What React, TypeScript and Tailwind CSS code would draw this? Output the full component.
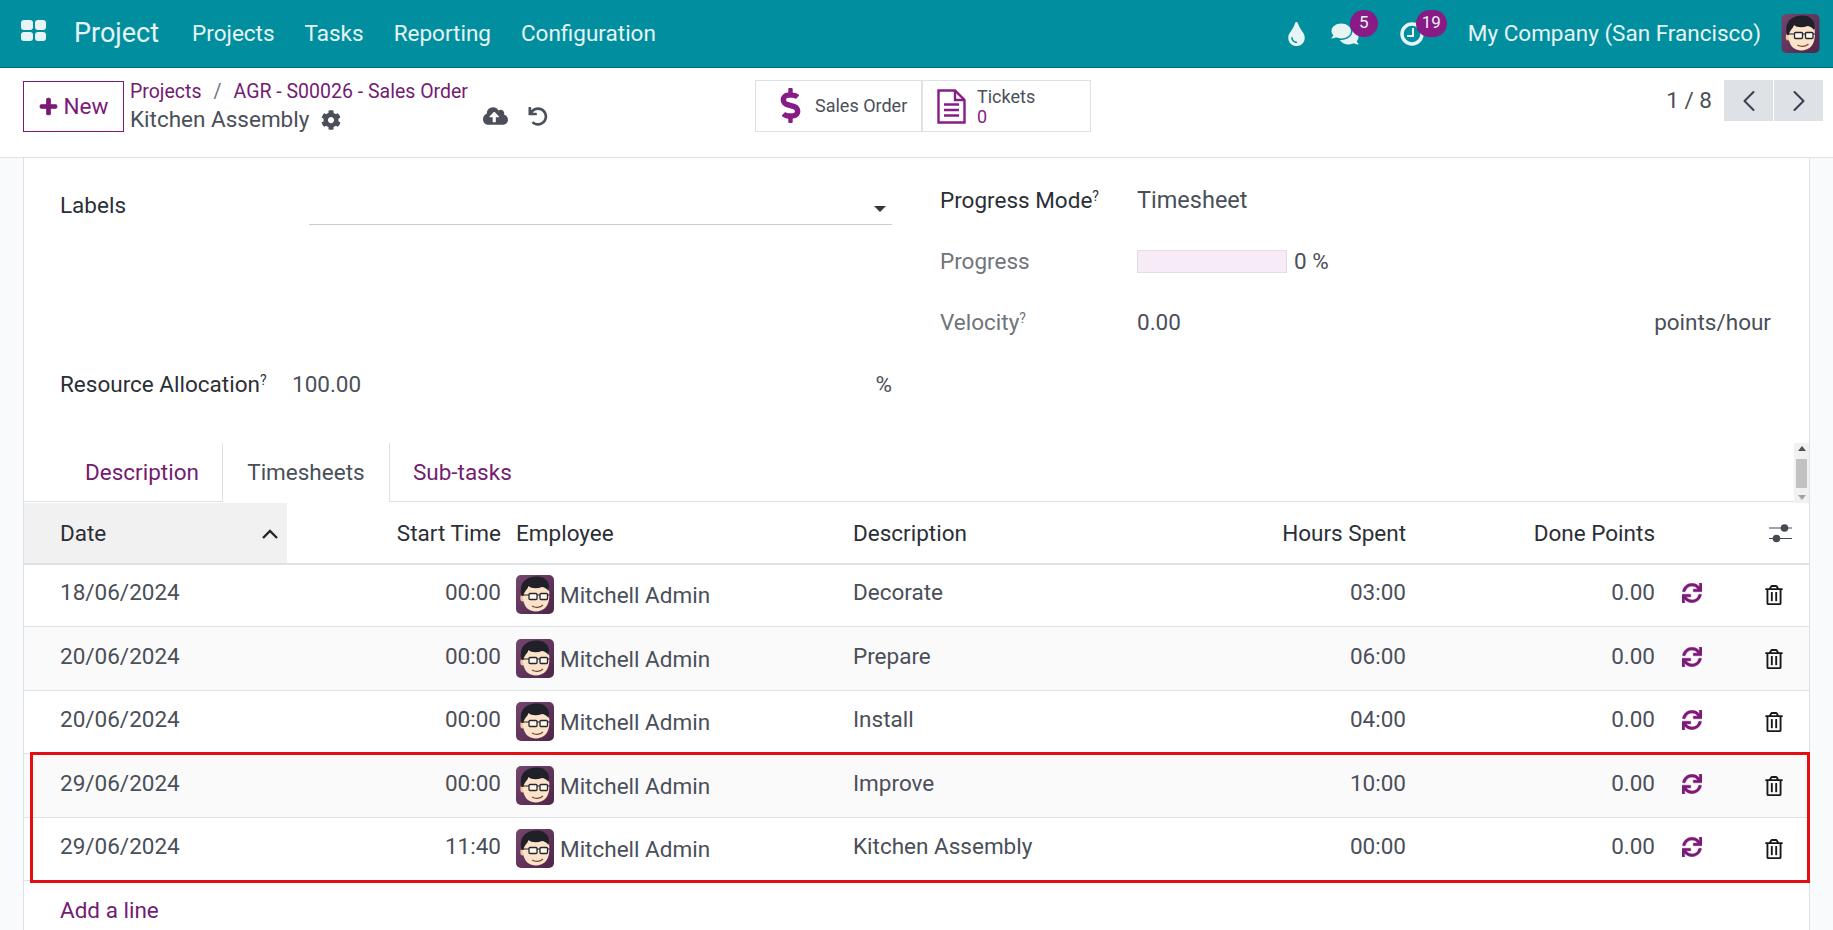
import { ChevronLeft, ChevronRight } from "lucide-react";
import {
  FaCloudUploadAlt,
  FaCog,
  FaComments,
  FaDollarSign,
  FaPlus,
  FaRegTrashAlt,
  FaSync,
  FaTint,
  FaUndo,
} from "react-icons/fa";

const navLinks = ["Projects", "Tasks", "Reporting", "Configuration"];

const rows = [
  { date: "18/06/2024", start: "00:00", desc: "Decorate", hours: "03:00", height: "h-[62px]", bg: "bg-white" },
  { date: "20/06/2024", start: "00:00", desc: "Prepare", hours: "06:00", height: "h-[63.6px]", bg: "bg-[#fafafa]" },
  { date: "20/06/2024", start: "00:00", desc: "Install", hours: "04:00", height: "h-[63.6px]", bg: "bg-white" },
];

const marked = [
  { date: "29/06/2024", start: "00:00", desc: "Improve", hours: "10:00", height: "h-[63.6px]", bg: "bg-[#fafafa]" },
  { date: "29/06/2024", start: "11:40", desc: "Kitchen Assembly", hours: "00:00", height: "h-[63.6px]", bg: "bg-white" },
];

const gridCols = "grid grid-cols-[263px_221px_337px_305px_263px_249px_83px_1fr]";

function Avatar({ className }: { className?: string }) {
  return (
    <svg className={className} viewBox="0 0 38 39">
      <defs>
        <linearGradient id="avatarBg" x1="0" y1="0" x2="1" y2="1">
          <stop offset="0" stopColor="#75456e" />
          <stop offset="1" stopColor="#4f2549" />
        </linearGradient>
      </defs>
      <rect width="38" height="39" rx="5" fill="url(#avatarBg)" />
      <ellipse cx="6.500" cy="23" rx="2.200" ry="3.500" fill="#eec3a0" />
      <path d="M6.500 14 C10 9 28 9 33 15 C34 22 33 28 30 32 C26 37 17 38 12 34 C8 31 6 24 6.500 14z" fill="#fbe3ca" />
      <path d="M5.500 21 C3.500 13 6 6 11 4 C15 0.500 27 0.500 30 5 C33 7 33.500 12 32.500 16 C30 13 28 12 26 12 C21 14 15 13.500 12.500 11 C12 14 8 16 7.500 21z" fill="#202028" />
      <rect x="13" y="18.500" width="8" height="6" rx="1" fill="#fffaf2" stroke="#26262b" strokeWidth="1.300" />
      <rect x="24" y="18.500" width="7.500" height="6" rx="1" fill="#fffaf2" stroke="#26262b" strokeWidth="1.300" />
      <path d="M21 20 H24 M7 20 H13 M31.500 20 H34" stroke="#26262b" strokeWidth="1.100" />
      <path d="M16 31 C19 33 24 33 27 30" fill="none" stroke="#7a4a35" strokeWidth="1.100" />
    </svg>
  );
}

function TimesheetRow({ row }: { row: (typeof rows)[number] }) {
  return (
    <div className={`${gridCols} items-end border-b border-[#dee2e6] ${row.height} ${row.bg}`}>
      <div className="pb-[22px] pl-[36px] leading-6">{row.date}</div>
      <div className="pr-[7px] pb-[22px] text-right leading-6">{row.start}</div>
      <div className="flex items-end pb-[12px] pl-2">
        <Avatar className="h-[39px] w-[38px] shrink-0" />
        <span className="ml-[6px] pb-[7px] leading-6">Mitchell Admin</span>
      </div>
      <div className="pb-[22px] pl-2 leading-6">{row.desc}</div>
      <div className="pr-[7px] pb-[22px] text-right leading-6">{row.hours}</div>
      <div className="pr-[7px] pb-[22px] text-right leading-6">0.00</div>
      <div className="pb-[23px] pl-5">
        <FaSync className="h-[20px] w-[20px] text-[#7c1a78]" stroke="currentColor" strokeWidth={10} />
      </div>
      <div className="pb-[21px] pl-[20px]">
        <FaRegTrashAlt className="h-[20px] w-[18px] text-[#16181b]" />
      </div>
    </div>
  );
}

export default function App() {
  return (
    <div className="flex h-[930px] w-[1833px] flex-col overflow-hidden bg-[#f9fafb] text-[22.5px] text-[#4a4f59] [font-family:Roboto,sans-serif]">
      {/* Navbar */}
      <header className="flex h-[68px] shrink-0 items-center border-b border-[#016b77] bg-[#018f9f] text-[#e6f4f5]">
        <div className="ml-[21px] -mt-[6px] grid h-[21px] w-[25px] grid-cols-2 gap-[2px]">
          <span className="rounded-[3px] bg-[#e6f4f5]" />
          <span className="rounded-[3px] bg-[#e6f4f5]" />
          <span className="rounded-[3px] bg-[#e6f4f5]" />
          <span className="rounded-[3px] bg-[#e6f4f5]" />
        </div>
        <span className="ml-[28px] text-[27px]">Project</span>
        <div className="mt-[1px] ml-[33px] flex gap-[30px]">
          {navLinks.map((link) => (
            <span key={link}>{link}</span>
          ))}
        </div>

        <FaTint className="ml-auto h-[24px] w-[19px]" />
        <div className="relative ml-[24px] h-[24px] w-[30px]">
          <FaComments className="h-[24px] w-[30px]" />
          <span className="absolute -top-[12px] left-[20px] flex h-[27px] w-[28px] items-center justify-center rounded-full bg-[#8a1a85] text-[17px]">
            5
          </span>
        </div>
        <div className="relative ml-[40px] h-[24px] w-[24px]">
          <svg className="h-[24px] w-[24px]" viewBox="0 0 24 24" fill="none" stroke="currentColor">
            <circle cx="12" cy="12" r="10" strokeWidth="3.400" />
            <path d="M13 6 V14 H7" strokeWidth="2" />
          </svg>
          <span className="absolute -top-[12px] left-[16px] flex h-[27px] w-[31px] items-center justify-center rounded-full bg-[#8a1a85] text-[17px]">
            19
          </span>
        </div>
        <span className="ml-[44px]">My Company (San Francisco)</span>
        <Avatar className="mr-[13px] ml-[20px] h-[39px] w-[39px]" />
      </header>

      {/* Control panel */}
      <div className="flex h-[90px] shrink-0 items-start border-b border-[#dee2e6] bg-white pt-[12px]">
        <button className="mt-[1px] ml-[23px] flex h-[51px] w-[101px] items-center justify-center gap-[6px] border border-[#7c1a78] text-[#7c1a78]">
          <FaPlus className="h-[19px] w-[19px]" stroke="currentColor" strokeWidth={30} />
          New
        </button>
        <div className="ml-[6px] w-[335px]">
          <div className="flex h-[24px] items-center text-[19.500px] whitespace-nowrap text-[#741b72]">
            Projects
            <span className="mx-[12px] text-[#6c757d]">/</span>
            AGR - S00026 - Sales Order
          </div>
          <div className="-mt-[1px] flex items-center whitespace-nowrap">
            Kitchen Assembly
            <FaCog className="ml-[12px] h-[20px] w-[20px]" />
          </div>
        </div>
        <div className="mt-[24px] flex items-center">
          <FaCloudUploadAlt className="ml-[18px] h-[24px] w-[25px]" />
          <FaUndo className="ml-[20px] h-[19px] w-[20px]" />
        </div>
        <div className="ml-[207px] flex h-[52px] border border-[#dee2e6]">
          <div className="flex w-[167px] items-center border-r-2 border-[#dee2e6] pb-[2px] pl-[24px] text-[18px]">
            <FaDollarSign className="h-[35px] w-[21px] text-[#861c85]" />
            <span className="ml-[14px]">Sales Order</span>
          </div>
          <div className="flex w-[167px] items-center pl-[14px]">
            <svg className="h-[35px] w-[29px] text-[#861c85]" viewBox="0 0 29 35" fill="none" stroke="currentColor" strokeWidth="2.400">
              <path d="M1.500 1.500 H18 L27.500 11 V33.500 H1.500z" />
              <path d="M18 1.500 V11 H27.500" />
              <path d="M7 15.500 H22 M7 21 H22 M7 26.500 H22" />
            </svg>
            <div className="ml-[11px] pt-[2px] text-[18px] leading-[20px]">
              <div>Tickets</div>
              <div className="text-[#861c85]">0</div>
            </div>
          </div>
        </div>
        <span className="mt-[4px] ml-auto">1 / 8</span>
        <div className="mr-[10px] ml-[12px] flex h-[41px] gap-[1px]">
          <div className="flex w-[49px] items-center justify-center bg-[#dee2e6]">
            <ChevronLeft className="h-[36px] w-[36px] text-[#374151]" strokeWidth={1.400} />
          </div>
          <div className="flex w-[49px] items-center justify-center bg-[#dee2e6]">
            <ChevronRight className="h-[36px] w-[36px] text-[#374151]" strokeWidth={1.400} />
          </div>
        </div>
      </div>

      {/* Sheet */}
      <main className="mx-[23px] min-h-0 flex-1 border-x border-[#dee2e6] bg-white">
        <div className="flex h-[285px] pt-[30px]">
          <div className="ml-[36px] w-[832px]">
            <div className="flex h-[184px] items-start pt-[5px]">
              <span className="w-[249px] leading-6 text-[#2b2f36]">Labels</span>
              <div className="relative h-[32px] flex-1 border-b border-[#c9ccd2]">
                <span className="absolute top-[13px] right-[6px] h-0 w-0 border-x-[6px] border-t-[6px] border-x-transparent border-t-[#33373f]" />
              </div>
            </div>
            <div className="flex items-center leading-6">
              <span className="w-[232px] text-[#2b2f36]">
                Resource Allocation<sup className="text-[14px]">?</sup>
              </span>
              <span>100.00</span>
              <span className="ml-auto">%</span>
            </div>
          </div>
          <div className="ml-[48px] w-[831px]">
            <div className="flex h-[61px] items-start leading-6">
              <span className="w-[197px] text-[#2b2f36]">
                Progress Mode<sup className="text-[14px]">?</sup>
              </span>
              <span className="text-[23.500px]">Timesheet</span>
            </div>
            <div className="flex h-[61px] items-start leading-6">
              <span className="w-[197px] text-[#70747b]">Progress</span>
              <div className="mt-px h-[23px] w-[150px] border border-[#e4dde4] bg-[#f6ebf6]" />
              <span className="ml-[7px]">0 %</span>
            </div>
            <div className="flex items-start leading-6">
              <span className="w-[197px] text-[#70747b]">
                Velocity<sup className="text-[14px]">?</sup>
              </span>
              <span>0.00</span>
              <span className="ml-auto">points/hour</span>
            </div>
          </div>
        </div>

        {/* Tabs */}
        <div className="flex h-[59px] border-b border-[#dee2e6]">
          <span className="mt-[15px] ml-[61px] leading-7 text-[#741b72]">Description</span>
          <div className="relative ml-[23px] flex w-[168px] justify-center border-x border-[#dee2e6] pt-[15px] leading-7">
            Timesheets
            <span className="absolute right-0 -bottom-px left-0 h-px bg-white" />
          </div>
          <span className="mt-[15px] ml-[23px] leading-7 text-[#741b72]">Sub-tasks</span>
          <div className="ml-auto flex h-[60px] w-[15px] flex-col items-center justify-between bg-[#f1f1f1] py-[3px]">
            <span className="h-0 w-0 border-x-[4px] border-b-[5px] border-x-transparent border-b-[#50505a]" />
            <span className="h-[29px] w-[11px] bg-[#c1c1c1]" />
            <span className="h-0 w-0 border-x-[4px] border-t-[5px] border-x-transparent border-t-[#a3a3a8]" />
          </div>
        </div>

        {/* Table */}
        <div className={`${gridCols} h-[63px] border-b-2 border-[#dee2e6] text-[#2b2f36]`}>
          <div className="mt-[1px] flex items-center justify-between bg-[#f1f1f1] pt-[2px] pr-[8px] pl-[36px]">
            Date
            <svg className="h-[10px] w-[18px]" viewBox="0 0 17 10" fill="none" stroke="#23262b" strokeWidth="2.400">
              <path d="M1.500 9 L8.500 2 L15.500 9" />
            </svg>
          </div>
          <div className="flex items-center justify-end pt-[2px] pr-[7px]">Start Time</div>
          <div className="flex items-center pt-[2px] pl-2">Employee</div>
          <div className="flex items-center pt-[2px] pl-2">Description</div>
          <div className="flex items-center justify-end pt-[2px] pr-[7px]">Hours Spent</div>
          <div className="flex items-center justify-end pt-[2px] pr-[7px]">Done Points</div>
          <div />
          <div className="flex items-center pl-[24px]">
            <svg className="h-[20px] w-[23px]" viewBox="0 0 23 20" fill="#444952" stroke="#444952">
              <path d="M0 5 H23 M0 15.500 H23" strokeWidth="1.200" />
              <circle cx="15.500" cy="5" r="3.800" stroke="none" />
              <circle cx="7.500" cy="15.500" r="3.800" stroke="none" />
            </svg>
          </div>
        </div>

        {rows.map((row, i) => (
          <TimesheetRow key={i} row={row} />
        ))}

        <div className="relative">
          {marked.map((row, i) => (
            <TimesheetRow key={i} row={row} />
          ))}
          {/* red marker around the last two lines */}
          <div className="pointer-events-none absolute -top-[2px] -right-px -bottom-[2px] left-[6px] border-[3px] border-[#e50d14]" />
        </div>

        <div className="pt-[17px] pl-[36px] leading-6 text-[#741b72]">Add a line</div>
      </main>
    </div>
  );
}
